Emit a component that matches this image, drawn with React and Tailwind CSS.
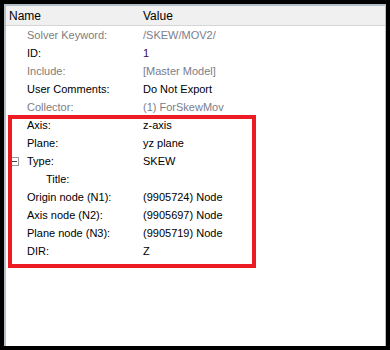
import React from 'react';

const rows = [
    { name: 'Solver Keyword:', value: '/SKEW/MOV2/', dim: true },
    { name: 'ID:', value: '1', valueClass: 'text-[#3c0a49]' },
    { name: 'Include:', value: '[Master Model]', dim: true },
    { name: 'User Comments:', value: 'Do Not Export' },
    { name: 'Collector:', value: '(1) ForSkewMov', dim: true },
    { name: 'Axis:', value: 'z-axis' },
    { name: 'Plane:', value: 'yz plane' },
    { name: 'Type:', value: 'SKEW', toggle: true },
    { name: 'Title:', value: '', indent: true },
    { name: 'Origin node (N1):', value: '(9905724) Node' },
    { name: 'Axis node (N2):', value: '(9905697) Node' },
    { name: 'Plane node (N3):', value: '(9905719) Node' },
    { name: 'DIR:', value: 'Z' },
];

const App = () => {
    return (
        <div className="w-[390px] h-[350px] bg-black pt-1 pl-1 pr-1 pb-1" style={{ fontFamily: '"Liberation Sans", Arial, sans-serif' }}>
            <div className="relative h-full bg-white border-l-2 border-t-2 border-r border-[#b4bec8] text-[11px] text-black">
                <div className="flex h-[20px] items-center bg-[#f0f0f0] border-b border-[#d5d5d5] text-[12px]">
                    <div className="w-[135px] pl-[3px]">Name</div>
                    <div className="pl-[2px]">Value</div>
                </div>
                {rows.map((r) => (
                    <div key={r.name} className="flex h-[18px] items-center">
                        <div className="w-[21px] flex items-center pl-[4px]">
                            {r.toggle && (
                                <div className="w-[9px] h-[9px] border border-[#9a9a9a] flex items-center justify-center">
                                    <div className="w-[5px] h-px bg-[#444]" />
                                </div>
                            )}
                        </div>
                        <div className={`w-[116px] ${r.indent ? 'pl-[19px]' : ''} ${r.dim ? 'text-[#7d7d7d]' : ''}`}>{r.name}</div>
                        <div className={r.valueClass ? r.valueClass : r.dim ? 'text-[#7a7d8c]' : ''}>{r.value}</div>
                    </div>
                ))}
                <div className="absolute left-[2px] top-[109px] w-[248px] h-[153px] border-4 border-[#ed1c24]" />
            </div>
        </div>
    );
};

export default App;
